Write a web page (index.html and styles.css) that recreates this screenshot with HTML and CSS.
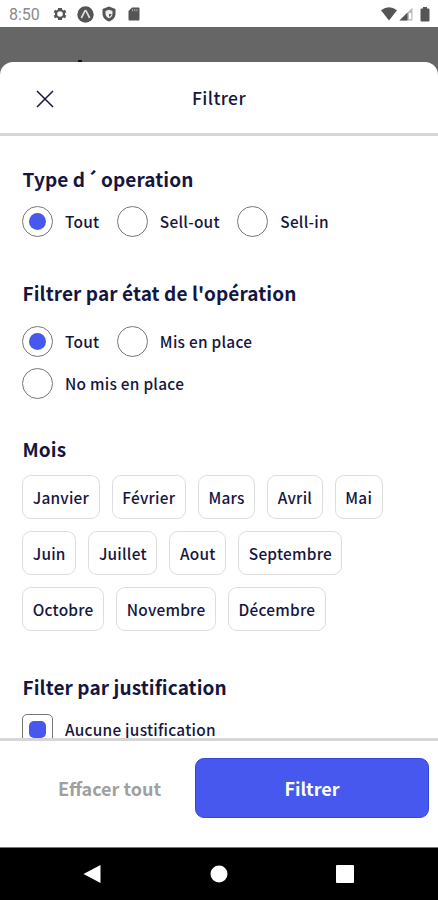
FILE: index.html
```html
<!DOCTYPE html>
<html lang="fr">
<head>
    <meta charset="UTF-8">
    <meta name="viewport" content="width=device-width, initial-scale=1.0">
    <title>Filtrer</title>
    <link rel="stylesheet" href="styles.css">
</head>
<body>
    <div class="status-bar">
        <span class="time">8:50</span>
        <div class="status-left">
            <svg width="16" height="16" viewBox="0 0 24 24"><path fill="#555" fill-rule="evenodd" d="M19.4 13a7.500 7.500 0 0 0 0-2l2.100-1.700-2-3.500-2.500 1a7.500 7.500 0 0 0-1.700-1L14.900 3h-5.800l-.4 2.800a7.500 7.500 0 0 0-1.700 1l-2.500-1-2 3.500L4.600 11a7.500 7.500 0 0 0 0 2l-2.100 1.700 2 3.500 2.500-1a7.500 7.500 0 0 0 1.700 1l.4 2.800h5.800l.4-2.800a7.500 7.500 0 0 0 1.700-1l2.500 1 2-3.500zM12 16.200a4.200 4.200 0 1 1 0-8.400 4.200 4.200 0 0 1 0 8.400z"/></svg>
            <svg width="17" height="17" viewBox="0 0 17 17"><circle cx="8.500" cy="8.500" r="8.200" fill="#555"/><path d="M4.300 12 7.700 5.300q.8-1.300 1.600 0L12.700 12" fill="none" stroke="#ddd" stroke-width="1.700"/></svg>
            <svg width="14" height="16" viewBox="0 0 14 16"><path fill="#555" d="M7 .5 13.500 3v4.500c0 4-2.800 6.800-6.500 8-3.700-1.200-6.500-4-6.500-8V3z"/><path fill="#eee" d="M7 3.700 10.500 5v2.700c0 2.100-1.400 3.700-3.500 4.500-2.100-.8-3.500-2.400-3.500-4.500V5z"/><path fill="#555" d="M7 5v3h2.500c-.2 1.300-1.200 2.200-2.500 2.900V8z"/></svg>
            <svg width="12" height="14" viewBox="0 0 12 14"><path fill="#555" d="M4 .5h6.500q1 0 1 1v11q0 1-1 1h-9q-1 0-1-1V4z"/><path stroke="#aaa" stroke-width="1" d="M4.500 2v2.300M6.800 2v2.300M9 2v2.300"/></svg>
        </div>
        <div class="status-right">
            <svg width="16" height="14" viewBox="0 0 16 14"><path fill="#555" d="M0 3.300Q8-2.700 16 3.300L8 13.500z"/></svg>
            <svg width="14" height="14" viewBox="0 0 14 14"><path fill="#bbb" d="M13.500.5v13H.5z"/><path fill="#555" d="M8.500 5.500v8h-8z"/><path fill="#fff" d="M10 6h2.300v6H10z"/></svg>
            <svg width="10" height="15" viewBox="0 0 10 15"><path fill="#555" d="M3 0h4v1.500h1.500q1 0 1 1v11q0 1-1 1h-7q-1 0-1-1v-11q0-1 1-1H3z"/></svg>
        </div>
    </div>

    <div class="overlay">
        <div class="sheet">
            <header>
                <svg class="close" width="18" height="18" viewBox="0 0 18 18"><path d="M1 1l16 16M17 1 1 17" stroke="#15163f" stroke-width="1.500"/></svg>
                <h1>Filtrer</h1>
            </header>

            <main>
                <section class="type">
                    <h2>Type d <span class="accent">´</span> operation</h2>
                    <div class="options">
                        <div class="option"><span class="radio checked"></span><span class="label">Tout</span></div>
                        <div class="option"><span class="radio"></span><span class="label">Sell-out</span></div>
                        <div class="option"><span class="radio"></span><span class="label">Sell-in</span></div>
                    </div>
                </section>

                <section class="state">
                    <h2>Filtrer par état de l'opération</h2>
                    <div class="options">
                        <div class="option"><span class="radio checked"></span><span class="label">Tout</span></div>
                        <div class="option"><span class="radio"></span><span class="label">Mis en place</span></div>
                        <div class="option"><span class="radio"></span><span class="label">No mis en place</span></div>
                    </div>
                </section>

                <section class="months">
                    <h2>Mois</h2>
                    <div class="chips">
                        <span class="chip">Janvier</span>
                        <span class="chip">Février</span>
                        <span class="chip">Mars</span>
                        <span class="chip">Avril</span>
                        <span class="chip">Mai</span>
                        <span class="chip">Juin</span>
                        <span class="chip">Juillet</span>
                        <span class="chip">Aout</span>
                        <span class="chip">Septembre</span>
                        <span class="chip">Octobre</span>
                        <span class="chip">Novembre</span>
                        <span class="chip">Décembre</span>
                    </div>
                </section>

                <section class="reason">
                    <h2>Filter par justification</h2>
                    <div class="option"><span class="checkbox checked"></span><span class="label">Aucune justification</span></div>
                </section>
            </main>

            <footer>
                <button class="clear">Effacer tout</button>
                <button class="apply">Filtrer</button>
            </footer>
        </div>
    </div>

    <nav>
        <svg width="18" height="20" viewBox="0 0 18 20"><path fill="#fff" d="M.5 10 17.500 1v18z"/></svg>
        <svg width="18" height="18" viewBox="0 0 18 18"><circle cx="9" cy="9" r="8.500" fill="#fff"/></svg>
        <svg width="18" height="18" viewBox="0 0 18 18"><rect width="18" height="18" rx="1" fill="#fff"/></svg>
    </nav>
</body>
</html>
```
FILE: styles.css
```css
* {
    box-sizing: border-box;
}

body {
    margin: 0;
    height: 900px;
    display: flex;
    flex-direction: column;
    overflow: hidden;
    font-family: "Noto Sans CJK JP", "Noto Sans", sans-serif;
    color: #15163f;
    background: #fff;
}

svg {
    display: block;
    flex: none;
}

.status-bar {
    height: 27px;
    display: flex;
    align-items: center;
    padding: 1px 8px 0 9px;
}

.time {
    width: 43px;
    font-family: Roboto, sans-serif;
    font-size: 16px;
    color: #8a8a8a;
}

.status-left {
    display: flex;
    align-items: center;
    gap: 8.5px;
}

.status-left svg:last-child {
    margin-left: 3px;
}

.status-right {
    display: flex;
    align-items: center;
    gap: 2px;
    margin-left: auto;
}

.status-right svg:last-child {
    margin-left: 5px;
}

/* dimmed page behind the sheet */
.overlay {
    position: relative;
    height: 820px;
    padding-top: 35px;
    background: #666;
}

.overlay::before {
    content: "";
    position: absolute;
    top: 33px;
    left: 78px;
    width: 4px;
    height: 2px;
    background: #111;
}

.sheet {
    height: 785px;
    display: flex;
    flex-direction: column;
    background: #fff;
    border-radius: 13px 13px 0 0;
    overflow: hidden;
}

header {
    height: 74px;
    flex: none;
    display: grid;
    grid-template-columns: 1fr auto 1fr;
    align-items: center;
    border-bottom: 3px solid #d6d6d6;
}

.close {
    margin: 3px 0 0 36px;
}

h1 {
    margin: 0 0 1px;
    font-size: 17.5px;
    font-weight: 500;
    letter-spacing: 0.4px;
}

main {
    flex: 1;
    min-height: 0;
    overflow: hidden;
    padding: 29px 22px 0;
}

h2 {
    margin: 0 0 0 0.5px;
    font-size: 19px;
    font-weight: 700;
    line-height: 28px;
    padding-bottom: 2px;
    letter-spacing: 0.1px;
    white-space: nowrap;
}

.accent {
    margin: 0 -1.5px 0 -3.5px;
}

.options {
    display: flex;
    flex-wrap: wrap;
    gap: 11px 17.5px;
}

.option {
    display: flex;
    align-items: center;
    gap: 12px;
    height: 31px;
    font-size: 15.4px;
    font-weight: 500;
    letter-spacing: 0.26px;
    white-space: nowrap;
}

.label {
    line-height: 24px;
    margin-bottom: 2px;
}

.radio,
.checkbox {
    width: 31px;
    height: 31px;
    flex: none;
    display: flex;
    align-items: center;
    justify-content: center;
    border: 1px solid #777;
    border-radius: 50%;
}

.checked::after {
    content: "";
    width: 17px;
    height: 17px;
    border-radius: 50%;
    background: #4658ee;
}

.checkbox {
    border-radius: 5px;
}

.checkbox::after {
    border-radius: 5px;
}

.type .options {
    margin-top: 11px;
}

.state {
    margin-top: 42px;
}

.state .options {
    margin-top: 17px;
}

.months {
    margin-top: 36px;
}

.chips {
    display: flex;
    flex-wrap: wrap;
    gap: 12px;
    margin-top: 10px;
}

.chip {
    height: 44px;
    padding: 0 9.5px 0 9.7px;
    border: 1px solid #ddd;
    border-radius: 9px;
    font-size: 15.4px;
    font-weight: 500;
    line-height: 42px;
    letter-spacing: 0.24px;
}

.reason {
    margin-top: 42px;
}

.reason .option {
    margin-top: 11px;
}

footer {
    height: 109px;
    flex: none;
    display: flex;
    align-items: flex-start;
    padding: 17px 9px 0 24px;
    border-top: 3px solid #d6d6d6;
}

button {
    height: 60px;
    padding: 0 0 1px;
    border: none;
    border-radius: 9px;
    background: none;
    font-family: inherit;
    font-size: 18px;
    font-weight: 700;
}

.clear {
    width: 171px;
    color: #a0a0a0;
}

.apply {
    flex: 1;
    border: 1px solid #3548dc;
    background: #4658ee;
    color: #fff;
}

nav {
    height: 53px;
    display: flex;
    align-items: center;
    justify-content: space-between;
    padding: 0 84px 0 83px;
    border-top: 1px solid #777;
    background: #000;
}
```
